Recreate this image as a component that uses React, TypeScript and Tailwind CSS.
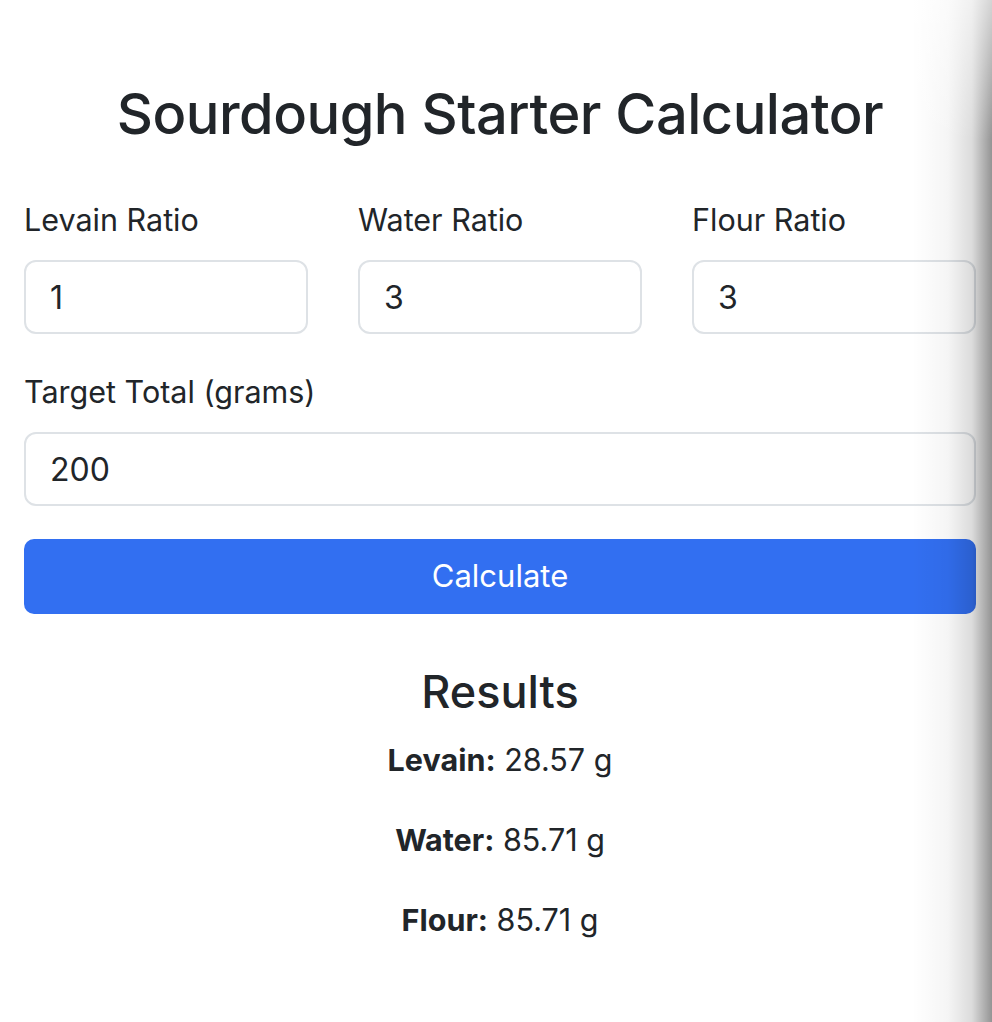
import React, { useState } from 'react';

const fieldClass =
    'w-full h-[74px] rounded-[12px] border-2 border-[#dee2e6] bg-white px-6 text-[32px] text-[#212529] outline-none';

const App: React.FC = () => {
    const [levain, setLevain] = useState('1');
    const [water, setWater] = useState('3');
    const [flour, setFlour] = useState('3');
    const [total, setTotal] = useState('200');
    const [result, setResult] = useState({ levain: 28.57, water: 85.71, flour: 85.71 });

    const calculate = () => {
        const l = parseFloat(levain) || 0;
        const w = parseFloat(water) || 0;
        const f = parseFloat(flour) || 0;
        const t = parseFloat(total) || 0;
        const sum = l + w + f;
        if (!sum) return;
        setResult({ levain: (t * l) / sum, water: (t * w) / sum, flour: (t * f) / sum });
    };

    const ratios = [
        { label: 'Levain Ratio', value: levain, set: setLevain },
        { label: 'Water Ratio', value: water, set: setWater },
        { label: 'Flour Ratio', value: flour, set: setFlour },
    ];

    return (
        <div
            className="relative min-h-[1022px] w-full overflow-hidden bg-white text-[#212529]"
            style={{ fontFamily: 'Inter, "Noto Sans", sans-serif' }}
        >
            <div className="pl-6 pr-4 pt-[80px]">
                {/* Title */}
                <h1 className="text-center text-[56px] font-medium leading-[68px] tracking-[-0.5px]">
                    Sourdough Starter Calculator
                </h1>

                {/* Ratio inputs */}
                <div className="mt-[48px] grid grid-cols-3 gap-[50px]">
                    {ratios.map((r) => (
                        <div key={r.label}>
                            <label className="mb-4 block text-[30.5px] leading-[48px]">{r.label}</label>
                            <input
                                type="number"
                                value={r.value}
                                onChange={(e) => r.set(e.target.value)}
                                className={fieldClass}
                            />
                        </div>
                    ))}
                </div>

                {/* Target total */}
                <div className="mt-[34px]">
                    <label className="mb-4 block text-[30.5px] leading-[48px]">Target Total (grams)</label>
                    <input
                        type="number"
                        value={total}
                        onChange={(e) => setTotal(e.target.value)}
                        className={fieldClass}
                    />
                </div>

                <button
                    onClick={calculate}
                    className="mt-[33px] h-[75px] w-full rounded-[10px] bg-[#326ff1] text-[31px] text-white"
                >
                    Calculate
                </button>

                {/* Results */}
                <div className="mt-[50px] text-center">
                    <h2 className="text-[45px] font-medium leading-[56px]">Results</h2>
                    <div className="mt-[16px] text-[30.5px] leading-[48px]">
                        <p className="mb-8">
                            <strong className="font-bold">Levain:</strong> {result.levain.toFixed(2)} g
                        </p>
                        <p className="mb-8">
                            <strong className="font-bold">Water:</strong> {result.water.toFixed(2)} g
                        </p>
                        <p className="mb-8">
                            <strong className="font-bold">Flour:</strong> {result.flour.toFixed(2)} g
                        </p>
                    </div>
                </div>
            </div>

            {/* right edge shadow */}
            <div className="pointer-events-none absolute inset-y-0 right-0 w-[80px] bg-[linear-gradient(to_right,rgba(0,0,0,0)_0%,rgba(0,0,0,0.04)_45%,rgba(0,0,0,0.14)_75%,rgba(0,0,0,0.42)_100%)]" />
            <div className="pointer-events-none absolute right-0 top-0 h-[140px] w-[80px] bg-[linear-gradient(to_bottom,rgba(255,255,255,0.6),rgba(255,255,255,0))]" />
        </div>
    );
};

export default App;
